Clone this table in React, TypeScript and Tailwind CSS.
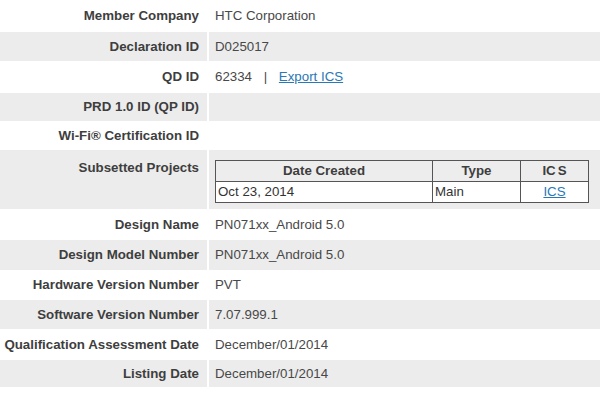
import React from "react";

type Row = { label: string; h: number; value?: React.ReactNode; top?: boolean };

const link = "text-[#2a78b5] underline underline-offset-1";

function SubTable() {
  return (
    <table className="border-collapse border border-[#555] w-[374px] text-[13.3px] text-[#333]">
      <thead>
        <tr className="bg-[#ededed] h-[21px]">
          <th className="border border-[#555] w-[217px] font-bold text-center p-0 leading-[20px] text-[#3e3e3e]">Date Created</th>
          <th className="border border-[#555] w-[88px] font-bold text-center p-0 leading-[20px] text-[#3e3e3e]">Type</th>
          <th className="border border-[#555] font-bold text-center p-0 leading-[20px] text-[#3e3e3e]">
            IC<span className="ml-[2px]">S</span>
          </th>
        </tr>
      </thead>
      <tbody>
        <tr className="bg-white h-[21px]">
          <td className="border border-[#555] px-[2px] py-0 leading-[20px]">Oct 23, 2014</td>
          <td className="border border-[#555] px-[2px] py-0 leading-[20px]">Main</td>
          <td className="border border-[#555] p-0 text-center leading-[20px]">
            <span className={link}>ICS</span>
          </td>
        </tr>
      </tbody>
    </table>
  );
}

const rows: Row[] = [
  { label: "Member Company", h: 32, value: "HTC Corporation" },
  { label: "Declaration ID", h: 29, value: "D025017" },
  {
    label: "QD ID",
    h: 32,
    value: (
      <span>
        62334 <span className="mx-[8px]">|</span> <span className={link}>Export ICS</span>
      </span>
    ),
  },
  { label: "PRD 1.0 ID (QP ID)", h: 28 },
  { label: "Wi-Fi® Certification ID", h: 29 },
  { label: "Subsetted Projects", h: 59, top: true, value: <SubTable /> },
  { label: "Design Name", h: 31, value: "PN071xx_Android 5.0" },
  { label: "Design Model Number", h: 30, value: "PN071xx_Android 5.0" },
  { label: "Hardware Version Number", h: 30, value: "PVT" },
  { label: "Software Version Number", h: 29, value: "7.07.999.1" },
  { label: "Qualification Assessment Date", h: 31, value: "December/01/2014" },
  { label: "Listing Date", h: 27, value: "December/01/2014" },
];

export default function App() {
  return (
    <div
      className="w-[600px] h-[395px] bg-white overflow-hidden text-[13.3px]"
      style={{ fontFamily: '"Liberation Sans", Arial, sans-serif' }}
    >
      {rows.map((r, i) => {
        const bg = i % 2 === 1 ? "bg-[#ececec]" : "bg-white";
        return (
          <div key={r.label} className="flex gap-[2px]" style={{ height: r.h }}>
            <div
              className={`w-[207px] shrink-0 ${bg} flex justify-end pr-[8px] font-bold text-[#3e3e3e] ${
                r.top ? "items-start pt-[8px]" : "items-center"
              }`}
            >
              {r.label}
            </div>
            <div
              className={`flex-1 ${bg} text-[#484848] ${
                r.top ? "pl-[6px] pt-[10px]" : "flex items-center pl-[6px]"
              }`}
            >
              {r.value}
            </div>
          </div>
        );
      })}
    </div>
  );
}
